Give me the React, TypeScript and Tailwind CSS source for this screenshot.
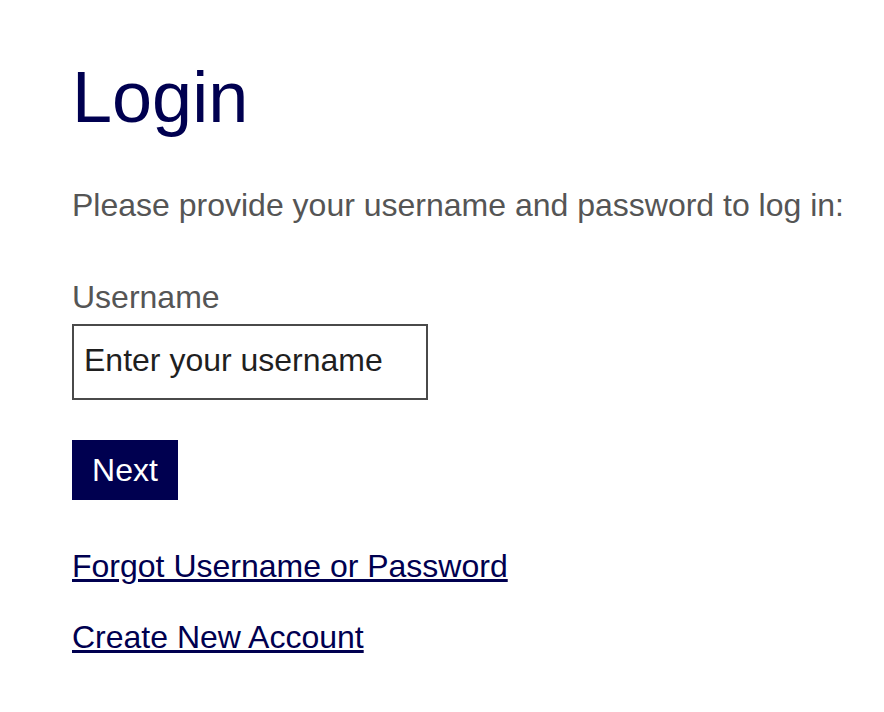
import { useState } from "react";

const font = { fontFamily: '"Liberation Sans", Arial, Helvetica, sans-serif' };

export default function App() {
  const [username, setUsername] = useState("");

  return (
    <div className="min-h-screen bg-white pl-[72px] pt-[61px]" style={font}>
      <h1 className="text-[72px] leading-none font-normal text-[#000050]">Login</h1>

      <p className="mt-[56px] text-[32px] leading-none text-[#555555]">
        Please provide your username and password to log in:
      </p>

      <form className="flex flex-col items-start" onSubmit={(e) => e.preventDefault()}>
        <label htmlFor="username" className="mt-[60px] text-[32px] leading-none text-[#555555]">
          Username
        </label>
        <input
          id="username"
          value={username}
          onChange={(e) => setUsername(e.target.value)}
          placeholder="Enter your username"
          className="mt-[11px] box-border h-[76px] w-[356px] border-2 border-[#4a4a4a] bg-white pl-[10px] pb-[3px] text-[32px] text-[#1f1f1f] outline-none placeholder:text-[#1f1f1f]"
          style={font}
        />
        <button
          type="submit"
          className="mt-[40px] h-[60px] w-[106px] bg-[#000050] px-[20px] text-[32px] leading-none text-white"
          style={font}
        >
          Next
        </button>
      </form>

      <div className="flex flex-col items-start">
        <a href="#" className="mt-[50px] text-[32px] leading-none text-[#000050] underline">
          Forgot Username or Password
        </a>
        <a href="#" className="mt-[39px] text-[32px] leading-none text-[#000050] underline">
          Create New Account
        </a>
      </div>
    </div>
  );
}
